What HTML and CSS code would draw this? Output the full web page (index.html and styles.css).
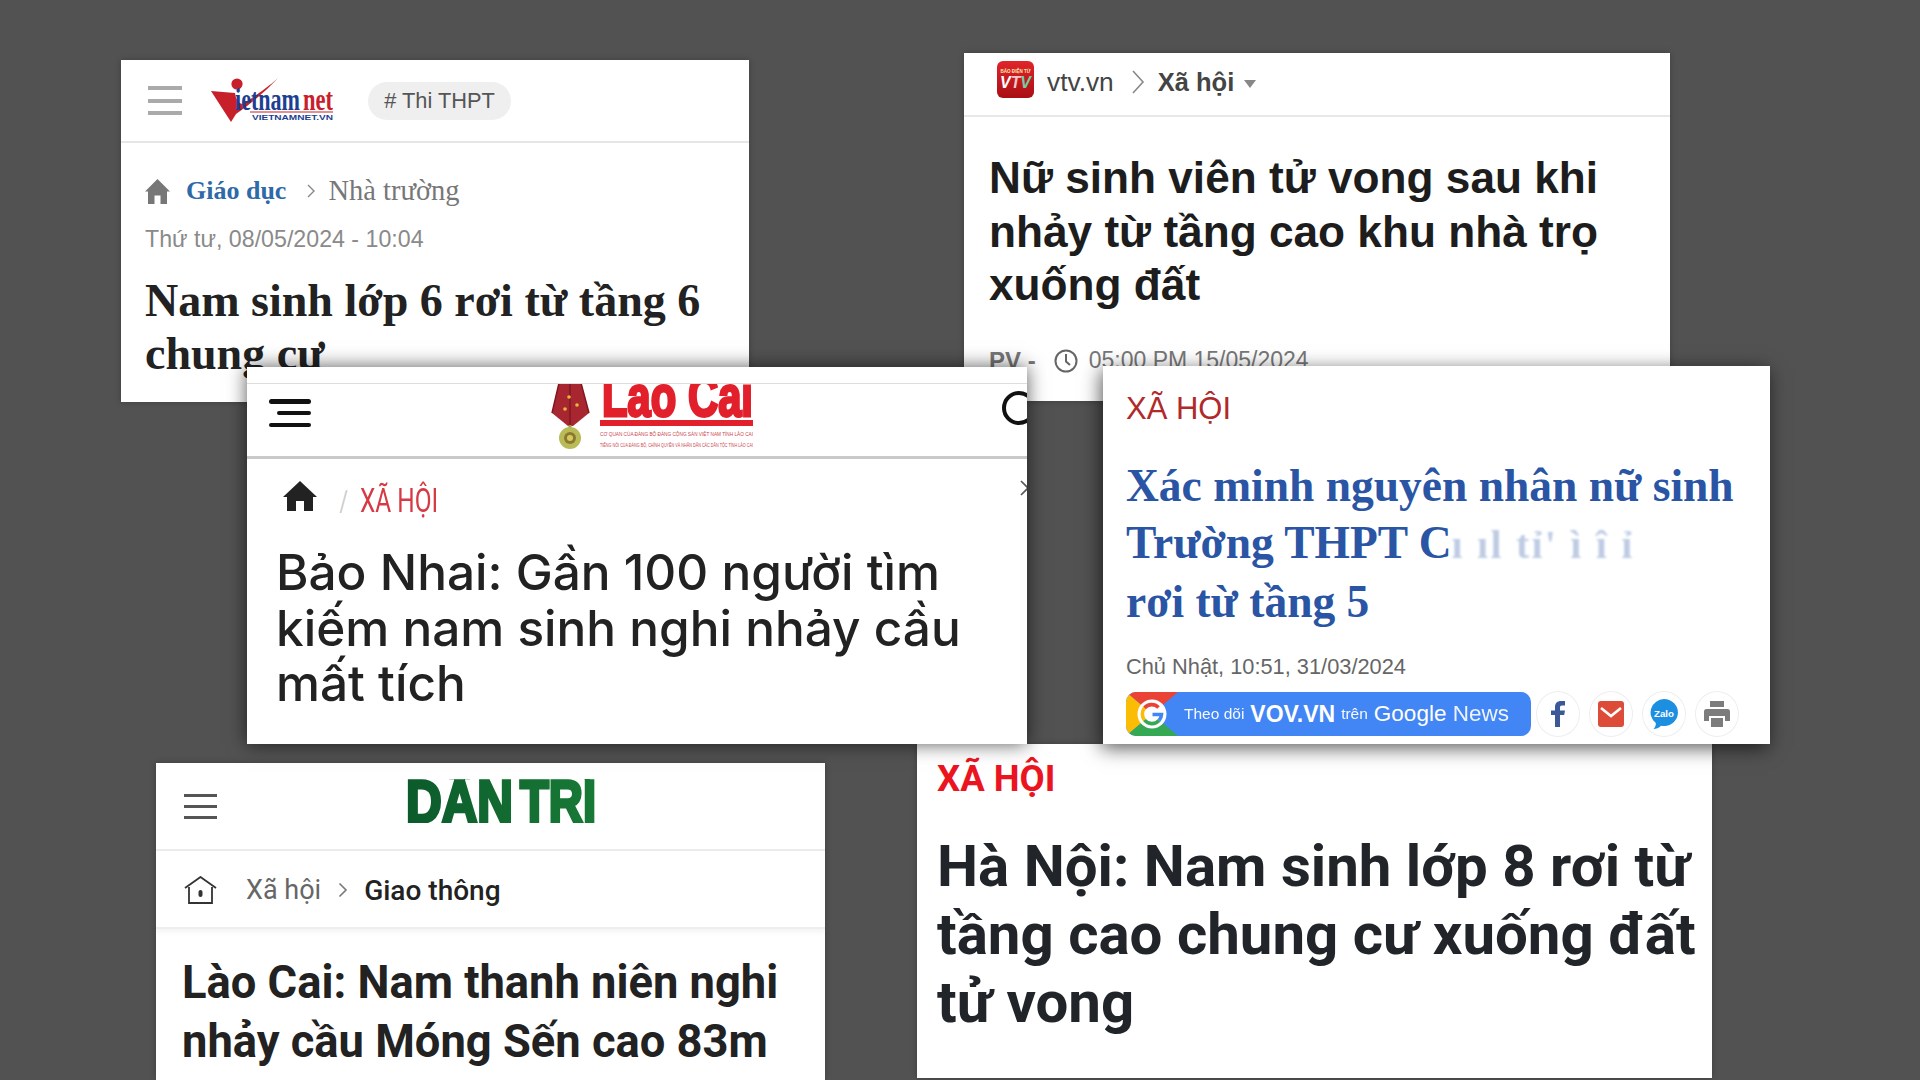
FILE: index.html
```html
<!DOCTYPE html>
<html lang="vi">
<head>
<meta charset="utf-8">
<title>Báo chí</title>
<link rel="stylesheet" href="styles.css">
</head>
<body>
<main class="canvas">

  <article class="card card-vnn">
    <header class="vnn-head">
      <span class="burger burger-grey"><i></i><i></i><i></i></span>
      <svg class="vnn-logo" viewBox="0 0 122 46" aria-label="Vietnamnet">
        <path d="M0 13 L24 15 C25 22 28 26 32 26 C50 14 62 5 67 0 C56 12 42 24 25 36 L20 44 Z" fill="#c8202b"/>
        <circle cx="26" cy="6" r="5.6" fill="#c8202b"/>
        <text x="24" y="32" class="vnn-t1" textLength="65" lengthAdjust="spacingAndGlyphs">ietnam</text>
        <text x="92" y="32" class="vnn-t2" textLength="30" lengthAdjust="spacingAndGlyphs">net</text>
        <rect x="39" y="33.5" width="83" height="1" fill="#c8202b"/>
        <text x="41" y="41.5" class="vnn-t3" textLength="81" lengthAdjust="spacingAndGlyphs">VIETNAMNET.VN</text>
      </svg>
      <span class="pill"># Thi THPT</span>
    </header>
    <div class="vnn-body">
      <nav class="vnn-crumb">
        <svg class="vnn-home" viewBox="0 0 25 25"><path d="M12.5 0 L25 12.5 L22 12.5 L22 25 L15.5 25 L15.5 16.5 L9.5 16.5 L9.5 25 L3 25 L3 12.5 L0 12.5 Z" fill="#777"/></svg>
        <b class="vnn-cat">Giáo dục</b>
        <svg class="chev-12" viewBox="0 0 10 16"><path d="M2 2 L8 8 L2 14" fill="none" stroke="#888" stroke-width="1.4"/></svg>
        <span class="vnn-sub">Nhà trường</span>
      </nav>
      <p class="vnn-date">Thứ tư, 08/05/2024 - 10:04</p>
      <h1 class="vnn-title">Nam sinh lớp 6 rơi từ tầng 6 chung cư</h1>
    </div>
  </article>

  <article class="card card-vtv">
    <header class="vtv-head">
      <svg class="vtv-icon" viewBox="0 0 37 37">
        <defs><linearGradient id="vtvg" x1="0" y1="0" x2="0" y2="1"><stop offset="0" stop-color="#e0252b"/><stop offset="1" stop-color="#a80f14"/></linearGradient></defs>
        <rect width="37" height="37" rx="6" fill="url(#vtvg)"/>
        <text x="18.5" y="12" class="vtv-small" text-anchor="middle" textLength="30" lengthAdjust="spacingAndGlyphs">BÁO ĐIỆN TỬ</text>
        <text x="18.5" y="27" class="vtv-big" text-anchor="middle" textLength="31" lengthAdjust="spacingAndGlyphs">V<tspan class="vtv-t">T</tspan><tspan class="vtv-v">V</tspan></text>
      </svg>
      <span class="vtv-site">vtv.vn</span>
      <svg class="chev-vtv" viewBox="0 0 14 26"><path d="M2 2 L12 13 L2 24" fill="none" stroke="#888" stroke-width="1.6"/></svg>
      <b class="vtv-cat">Xã hội</b>
      <i class="caret"></i>
    </header>
    <div class="vtv-body">
      <h1 class="vtv-title">Nữ sinh viên tử vong sau khi nhảy từ tầng cao khu nhà trọ xuống đất</h1>
      <div class="vtv-meta">
        <b>PV -</b>
        <svg class="clock" viewBox="0 0 24 24"><circle cx="12" cy="12" r="10.5" fill="none" stroke="#666" stroke-width="2"/><path d="M12 5 V12.5 L16 16" fill="none" stroke="#666" stroke-width="2"/></svg>
        <span>05:00 PM 15/05/2024</span>
      </div>
    </div>
  </article>

  <article class="card card-dt">
    <header class="dt-head">
      <span class="burger burger-thin"><i></i><i></i><i></i></span>
      <svg class="dt-logo" viewBox="0 0 192 44" aria-label="Dân Trí">
        <defs><linearGradient id="dtg" gradientUnits="userSpaceOnUse" x1="0" y1="0" x2="192" y2="0"><stop offset="0" stop-color="#0b5a2b"/><stop offset="1" stop-color="#187a36"/></linearGradient></defs>
        <text x="1" y="43" class="dt-word" fill="url(#dtg)" stroke="url(#dtg)" textLength="107" lengthAdjust="spacingAndGlyphs">DÂN</text>
        <text x="115" y="43" class="dt-word" fill="url(#dtg)" stroke="url(#dtg)" textLength="76" lengthAdjust="spacingAndGlyphs">TRÍ</text>
      </svg>
    </header>
    <nav class="dt-crumb">
      <svg class="dt-home" viewBox="0 0 33 28"><path d="M1 12 L16.5 1 L32 12" fill="none" stroke="#333" stroke-width="1.8"/><path d="M5 11 V27 H28 V11" fill="none" stroke="#333" stroke-width="1.8"/><rect x="14.5" y="14" width="4" height="7" rx="2" fill="#333"/></svg>
      <span class="dt-cat">Xã hội</span>
      <svg class="dt-chev" viewBox="0 0 10 16"><path d="M1.5 1.5 L8 8 L1.5 14.5" fill="none" stroke="#777" stroke-width="1.6"/></svg>
      <span class="dt-sub">Giao thông</span>
    </nav>
    <h1 class="dt-title">Lào Cai: Nam thanh niên nghi nhảy cầu Móng Sến cao 83m</h1>
  </article>

  <article class="card card-kt">
    <p class="kt-cat">XÃ HỘI</p>
    <h1 class="kt-title">Hà Nội: Nam sinh lớp 8 rơi từ tầng cao chung cư xuống đất tử vong</h1>
  </article>

  <article class="card card-lc">
    <div class="lc-strip"></div>
    <header class="lc-head">
      <span class="burger burger-black"><i></i><i></i><i></i></span>
      <svg class="lc-logo" viewBox="0 0 202 74" aria-label="Lào Cai">
        <path d="M8 0 H30 L38 30 L22 43 H17 L1 30 Z" fill="#a8262f"/>
        <path d="M19 0 V43 M8 0 L1 30 M30 0 L38 30" stroke="#7d1820" stroke-width="1.5" fill="none"/>
        <circle cx="18" cy="14" r="1.8" fill="#e5b93c"/><circle cx="26" cy="22" r="1.8" fill="#e5b93c"/><circle cx="14" cy="26" r="1.8" fill="#e5b93c"/>
        <rect x="17.5" y="42" width="3" height="6" fill="#9a9a4a"/>
        <circle cx="19" cy="55" r="11" fill="#b9bb57"/><circle cx="19" cy="55" r="6" fill="#8a7a30"/><circle cx="19" cy="55" r="3" fill="#d8c95e"/>
        <text x="51" y="33" class="lc-word" textLength="151" lengthAdjust="spacingAndGlyphs">Lào Cai</text>
        <rect x="49" y="37" width="153" height="6" fill="#e2202c"/>
        <text x="49" y="53" class="lc-tiny" textLength="153" lengthAdjust="spacingAndGlyphs">CƠ QUAN CỦA ĐẢNG BỘ ĐẢNG CỘNG SẢN VIỆT NAM TỈNH LÀO CAI</text>
        <text x="49" y="64" class="lc-tiny" textLength="153" lengthAdjust="spacingAndGlyphs">TIẾNG NÓI CỦA ĐẢNG BỘ, CHÍNH QUYỀN VÀ NHÂN DÂN CÁC DÂN TỘC TỈNH LÀO CAI</text>
      </svg>
      <i class="lc-search"></i>
    </header>
    <nav class="lc-crumb">
      <svg class="lc-home" viewBox="0 0 34 30"><path d="M17 0 L34 16 L30 16 L30 30 L21 30 L21 20 L13 20 L13 30 L4 30 L4 16 L0 16 Z" fill="#222"/></svg>
      <span class="lc-slash">/</span>
      <span class="lc-cat">XÃ HỘI</span>
      <svg class="lc-chev" viewBox="0 0 10 18"><path d="M1 2 L8 9 L1 16" fill="none" stroke="#555" stroke-width="1.6"/></svg>
    </nav>
    <h1 class="lc-title">Bảo Nhai: Gần 100 người tìm kiếm nam sinh nghi nhảy cầu mất tích</h1>
  </article>

  <article class="card card-vov">
    <p class="vov-cat">XÃ HỘI</p>
    <h1 class="vov-title">Xác minh nguyên nhân nữ sinh<br>Trường THPT C<span class="vov-blur">ı ıl tỉ' ì î ỉ</span><br>rơi từ tầng 5</h1>
    <p class="vov-date">Chủ Nhật, 10:51, 31/03/2024</p>
    <div class="vov-bar">
      <div class="gnews">
        <svg class="gnews-mark" viewBox="0 0 52 44">
          <path d="M0 0 H52 L26 22 Z" fill="#ea4335"/>
          <path d="M0 0 L26 22 L0 44 Z" fill="#fbbc05"/>
          <path d="M0 44 L26 22 L52 44 Z" fill="#34a853"/>
          <circle cx="26" cy="22" r="14.5" fill="#fff"/>
          <path d="M32.5 15.5 A9.5 9.5 0 0 0 18.5 16" fill="none" stroke="#ea4335" stroke-width="3.6"/>
          <path d="M18.5 16 A9.5 9.5 0 0 0 18.5 28" fill="none" stroke="#fbbc05" stroke-width="3.6"/>
          <path d="M18.5 28 A9.5 9.5 0 0 0 33 28.5" fill="none" stroke="#34a853" stroke-width="3.6"/>
          <path d="M33 28.5 A9.5 9.5 0 0 0 35.5 22.5 H26.5" fill="none" stroke="#4285f4" stroke-width="3.6"/>
        </svg>
        <span class="gn-a">Theo dõi</span>
        <b class="gn-b">VOV.VN</b>
        <span class="gn-a">trên</span>
        <span class="gn-c">Google <span class="gn-d">News</span></span>
      </div>
      <span class="round"><svg viewBox="0 0 14 26" class="ic-f"><path d="M4 26 V14 H0 V9.5 H4 V6 C4 2 6.5 0 10 0 H14 V4.5 H11 C9.5 4.5 9 5.2 9 6.5 V9.5 H14 L13.2 14 H9 V26 Z" fill="#3b5998"/></svg></span>
      <span class="round"><svg viewBox="0 0 26 26" class="ic-m"><rect width="26" height="26" rx="3" fill="#dd4b39"/><path d="M3 7 L13 15 L23 7" fill="none" stroke="#fff" stroke-width="2.6"/></svg></span>
      <span class="round"><svg viewBox="0 0 28 30" class="ic-z"><path d="M14 0 A14 13.5 0 1 1 11 26.7 C9 29 6 30 3.5 30 C5.5 28 6 25.5 5.8 24 A14 13.5 0 0 1 14 0 Z" fill="#1d8fe1"/><text x="14" y="17.5" class="zalo" text-anchor="middle" textLength="20" lengthAdjust="spacingAndGlyphs">Zalo</text></svg></span>
      <span class="round"><svg viewBox="0 0 26 26" class="ic-p"><path d="M6 0 H20 V6 H6 Z M2.5 8 H23.5 A2.5 2.5 0 0 1 26 10.5 V20 H21 V15 H5 V20 H0 V10.5 A2.5 2.5 0 0 1 2.5 8 Z M7 17 H19 V26 H7 Z" fill="#7c7c7c"/></svg></span>
    </div>
  </article>

</main>
</body>
</html>
```

FILE: styles.css
```css
* { box-sizing: border-box; }
html, body { margin: 0; padding: 0; }
body { width: 1920px; height: 1080px; overflow: hidden; background: #525252; }
h1, p { margin: 0; }

.canvas { position: relative; width: 1920px; height: 1080px; overflow: hidden; background: #525252; }

.card { position: absolute; background: #fff; overflow: hidden; box-shadow: 0 0 6px rgba(0,0,0,.25); }
.card-vnn { left: 121px; top: 60px; width: 628px; height: 342px; font-family: "Liberation Sans", sans-serif; }
.card-vtv { left: 964px; top: 53px; width: 706px; height: 348px; font-family: "Liberation Sans", sans-serif; }
.card-dt  { left: 156px; top: 763px; width: 669px; height: 317px; font-family: Roboto, sans-serif; }
.card-kt  { left: 917px; top: 744px; width: 795px; height: 334px; font-family: Roboto, sans-serif; }
.card-lc  { left: 247px; top: 367px; width: 780px; height: 377px; box-shadow: 0 0 18px rgba(0,0,0,.65); font-family: Inter, sans-serif; }
.card-vov { left: 1103px; top: 366px; width: 667px; height: 378px; box-shadow: -2px 4px 18px rgba(0,0,0,.65); font-family: "Liberation Sans", sans-serif; padding: 0 23px; }

/* hamburgers */
.burger { display: flex; flex-direction: column; justify-content: space-between; flex: none; }
.burger i { display: block; }
.burger-grey { width: 34px; height: 29px; }
.burger-grey i { height: 4px; background: #aaa; }
.burger-thin { width: 33px; height: 25px; }
.burger-thin i { height: 3px; background: #555; }
.burger-black { width: 42px; height: 28px; align-items: flex-end; }
.burger-black i { height: 4.5px; background: #111; border-radius: 3px; width: 100%; }
.burger-black i:nth-child(2) { width: 34px; }

/* vietnamnet */
.vnn-head { height: 83px; border-bottom: 2px solid #e6e6e6; display: flex; align-items: center; padding-left: 27px; }
.vnn-logo { width: 122px; height: 46px; margin-left: 29px; flex: none; }
.vnn-t1 { font: bold 32px "Liberation Serif", serif; fill: #1d3f92; }
.vnn-t2 { font: bold 32px "Liberation Serif", serif; fill: #c8202b; }
.vnn-t3 { font: bold 8px "Liberation Sans", sans-serif; fill: #1d3f92; }
.pill { margin-left: 35px; width: 143px; height: 38px; border-radius: 19px; background: #efefef; color: #555; font-size: 21.8px; display: flex; align-items: center; justify-content: center; }
.vnn-body { padding: 34px 24px 0; }
.vnn-crumb { display: flex; align-items: center; height: 28px; }
.vnn-home { width: 25px; height: 25px; flex: none; }
.vnn-cat { margin-left: 16px; font: bold 26px "Liberation Serif", serif; color: #2f6aa8; }
.chev-12 { width: 10px; height: 16px; margin-left: 20px; flex: none; }
.vnn-sub { margin-left: 12px; font: 28.5px "Liberation Serif", serif; color: #777; }
.vnn-date { margin-top: 21px; font-size: 23.2px; line-height: 26px; color: #8a8a8a; }
.vnn-title { margin-top: 22px; font: bold 46px/53px "Liberation Serif", serif; color: #222; }

/* vtv */
.vtv-head { height: 64px; border-bottom: 2px solid #e8e8e8; display: flex; align-items: center; padding: 0 0 4px 33px; }
.vtv-icon { width: 37px; height: 37px; flex: none; margin-top: -5px; }
.vtv-small { font: bold 5px "Liberation Sans", sans-serif; fill: #ffe9b0; }
.vtv-big { font: bold italic 17px "Liberation Sans", sans-serif; fill: #fff; }
.vtv-t { fill: #f7c7c7; }
.vtv-v { fill: #6fd0a0; }
.vtv-site { margin-left: 13px; font-size: 26.3px; color: #444; }
.chev-vtv { width: 14px; height: 26px; margin-left: 17px; flex: none; }
.vtv-cat { margin-left: 13px; font-size: 25.5px; color: #444; }
.caret { margin: 4px 0 0 10px; border: 6.5px solid transparent; border-top: 8px solid #888; border-bottom: 0; }
.vtv-body { padding: 34px 25px 0; }
.vtv-title { font: bold 44.2px/53.5px "Liberation Sans", sans-serif; color: #1d1d1d; }
.vtv-meta { margin-top: 35px; display: flex; align-items: center; color: #777; font-size: 23px; height: 28px; }
.vtv-meta b { font-size: 24px; }
.clock { width: 24px; height: 24px; margin-left: 18px; flex: none; }
.vtv-meta span { margin-left: 11px; }

/* dan tri */
.dt-head { height: 88px; border-bottom: 2px solid #ececec; display: flex; align-items: center; padding-left: 28px; }
.dt-logo { width: 192px; height: 44px; margin-left: 188px; margin-top: -10px; flex: none; overflow: hidden; }
.dt-word { font: bold 60px "Liberation Sans", sans-serif; stroke-width: 3.5px; }
.dt-crumb { height: 78px; border-bottom: 2px solid #eee; box-shadow: 0 3px 5px rgba(0,0,0,.05); display: flex; align-items: center; padding: 2px 0 0 28px; }
.dt-home { width: 33px; height: 28px; flex: none; }
.dt-cat { margin-left: 29px; font-size: 27px; color: #666; }
.dt-chev { width: 10px; height: 16px; margin-left: 17px; flex: none; }
.dt-sub { margin-left: 16px; font-size: 28px; font-weight: 500; color: #222; }
.dt-title { margin: 25px 20px 0 26px; font-size: 45.3px; line-height: 58.5px; font-weight: 700; color: #222; }

/* kt */
.kt-cat { padding: 12px 20px 0; font-size: 36.5px; line-height: 46px; font-weight: 700; color: #ea1520; }
.kt-title { margin: 30px 0 0 20px; font-size: 58.2px; line-height: 68px; font-weight: 700; color: #212529; }

/* lao cai */
.lc-strip { height: 17px; border-bottom: 1px solid #ddd; }
.lc-head { height: 75px; border-bottom: 3px solid #c9c9c9; display: flex; align-items: center; overflow: hidden; padding-left: 22px; }
.lc-head .burger { margin-top: -14px; }
.lc-logo { width: 202px; height: 74px; margin-left: 240px; flex: none; }
.lc-word { font: bold 58px "Liberation Sans", sans-serif; fill: #e2202c; stroke: #e2202c; stroke-width: 3px; }
.lc-tiny { font: 6px "Liberation Sans", sans-serif; fill: #c9434b; }
.lc-search { width: 34px; height: 34px; border: 4px solid #111; border-radius: 50%; margin-left: 249px; margin-top: -24px; flex: none; }
.lc-crumb { height: 92px; display: flex; align-items: center; padding: 0 0 10px 36px; position: relative; }
.lc-home { width: 34px; height: 30px; flex: none; margin-top: -8px; }
.lc-slash { margin-left: 22px; font-size: 26px; color: #ccc; font-weight: 300; }
.lc-cat { margin-left: 12px; font: 33px Roboto, sans-serif; color: #d63a45; display: inline-block; transform: scaleX(.74); transform-origin: left center; }
.lc-chev { position: absolute; right: -3px; top: 20px; width: 10px; height: 18px; }
.lc-title { margin: -6px 28px 0 29px; font-size: 49.5px; line-height: 55.5px; font-weight: 500; color: #222; }

/* vov */
.vov-cat { margin-top: 25px; font-size: 31px; line-height: 36px; color: #b02a2a; }
.vov-title { margin-top: 30px; font: bold 45.5px/57px "Liberation Serif", serif; color: #2a55a5; }
.vov-blur { opacity: .3; filter: blur(1px); font-size: 40px; letter-spacing: 2.2px; }
.vov-date { margin-top: 24px; font-size: 21.8px; line-height: 26px; color: #666; }
.vov-bar { margin-top: 11px; display: flex; align-items: center; }
.gnews { width: 405px; height: 44px; border-radius: 10px; background: #4285f4; color: #fff; display: flex; align-items: center; overflow: hidden; flex: none; margin-right: -4px; }
.gnews-mark { width: 52px; height: 44px; flex: none; }
.gn-a { font-size: 15.5px; margin-left: 6px; opacity: .95; }
.gn-b { font-size: 23px; margin-left: 6px; }
.gn-c { font-size: 22.5px; margin-left: 6px; }
.gn-d { font-weight: 400; opacity: .9; }
.round { width: 44px; height: 46px; border: 1px solid #eee; border-radius: 50%; display: flex; align-items: center; justify-content: center; margin-left: 9px; flex: none; }
.ic-f { width: 14px; height: 26px; }
.ic-m { width: 26px; height: 26px; }
.ic-z { width: 28px; height: 30px; }
.ic-p { width: 26px; height: 26px; }
.zalo { font: bold 9px "Liberation Sans", sans-serif; fill: #fff; }
```
